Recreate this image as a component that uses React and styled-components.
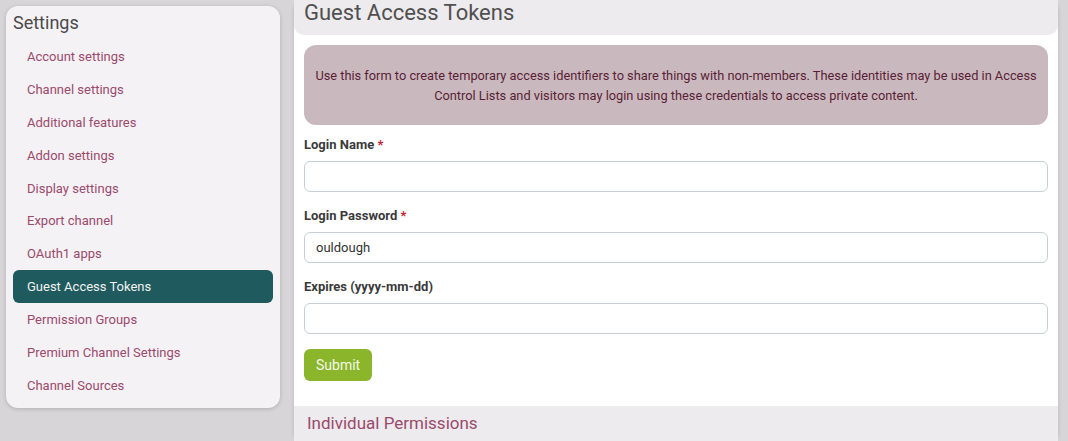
import React from 'react'
import styled, { createGlobalStyle } from 'styled-components'

const GlobalStyle = createGlobalStyle`
  html, body {
    margin: 0;
    padding: 0;
    background: #d7d5d7;
    font-family: Roboto, "Liberation Sans", Arial, sans-serif;
    overflow: hidden;
  }
  * { box-sizing: border-box; }
`

const navItems = [
  'Account settings',
  'Channel settings',
  'Additional features',
  'Addon settings',
  'Display settings',
  'Export channel',
  'OAuth1 apps',
  'Guest Access Tokens',
  'Permission Groups',
  'Premium Channel Settings',
  'Channel Sources',
]

function App() {
  return (
    <Page>
      <GlobalStyle />
      <Sidebar>
        <SideTitle>Settings</SideTitle>
        {navItems.map((item) => (
          <NavLink key={item} $active={item === 'Guest Access Tokens'}>{item}</NavLink>
        ))}
      </Sidebar>
      <Main>
        <Header>Guest Access Tokens</Header>
        <Card>
          <Alert>
            Use this form to create temporary access identifiers to share things with non-members. These identities may be used in Access Control Lists and visitors may login using these credentials to access private content.
          </Alert>
          <Field>
            <Label>Login Name <Required>*</Required></Label>
            <Input type="text" defaultValue="" />
          </Field>
          <Field>
            <Label>Login Password <Required>*</Required></Label>
            <Input type="text" defaultValue="ouldough" />
          </Field>
          <Field>
            <Label>Expires (yyyy-mm-dd)</Label>
            <Input type="text" defaultValue="" />
          </Field>
          <SubmitButton>Submit</SubmitButton>
        </Card>
        <Section>
          <SectionTitle>Individual Permissions</SectionTitle>
        </Section>
      </Main>
    </Page>
  )
}

const Page = styled.div`
  display: flex;
  align-items: flex-start;
  gap: 14px;
  padding: 0 10px 0 6px;
  height: 441px;
`

const Sidebar = styled.nav`
  width: 274px;
  flex-shrink: 0;
  margin-top: 6px;
  background: #f5f2f6;
  border-radius: 12px;
  padding: 0 7px 6px;
  box-shadow: 0 1px 4px rgba(0, 0, 0, 0.18);
  display: flex;
  flex-direction: column;
`

const SideTitle = styled.h3`
  margin: 6px 0 6px;
  font-size: 18px;
  font-weight: 400;
  line-height: 22px;
  color: #4a4a4a;
`

const NavLink = styled.a`
  display: flex;
  align-items: center;
  height: 32.9px;
  padding: 0 14px;
  border-radius: 6px;
  font-size: 13px;
  text-decoration: none;
  color: ${(p) => (p.$active ? '#f2f2f2' : '#9a4a6b')};
  background: ${(p) => (p.$active ? '#1e5a5e' : 'transparent')};
`

const Main = styled.div`
  width: 764px;
  flex-shrink: 0;
  background: #ffffff;
  border-radius: 10px;
  box-shadow: 0 1px 4px rgba(0, 0, 0, 0.15);
  display: flex;
  flex-direction: column;
  height: 441px;
`

const Header = styled.h2`
  margin: 0 0 2px;
  height: 35px;
  padding: 0 10px;
  font-size: 22px;
  font-weight: 400;
  line-height: 26px;
  color: #505050;
  background: #edebee;
  border-radius: 0 0 10px 10px;
`

const Card = styled.div`
  background: #ffffff;
  border-radius: 10px;
  padding: 8px 10px 25px;
`

const Alert = styled.div`
  background: #c9b9bf;
  color: #5a1e34;
  border-radius: 12px;
  padding: 21px 8px 20px;
  font-size: 12.8px;
  line-height: 19.5px;
  text-align: center;
  margin-bottom: 11px;
`

const Field = styled.div`
  margin-bottom: 15px;
`

const Label = styled.label`
  display: block;
  font-size: 13px;
  font-weight: 700;
  line-height: 17px;
  color: #3a3a3a;
  margin-bottom: 8px;
`

const Required = styled.span`
  color: #c8202f;
`

const Input = styled.input`
  display: block;
  width: 100%;
  height: 31px;
  padding: 0 11px;
  border: 1px solid #c9ced4;
  border-radius: 6px;
  font-family: Roboto, "Liberation Sans", Arial, sans-serif;
  font-size: 13px;
  color: #333;
  background: #fff;
  outline: none;
`

const SubmitButton = styled.button`
  height: 32px;
  padding: 0 12px;
  border: none;
  border-radius: 6px;
  background: #8bb52a;
  color: #f4f8ea;
  font-family: Roboto, "Liberation Sans", Arial, sans-serif;
  font-size: 14px;
  cursor: pointer;
`

const Section = styled.div`
  flex: 1;
  background: #edebee;
  padding: 6px 13px;
`

const SectionTitle = styled.h3`
  margin: 0;
  font-size: 17px;
  font-weight: 400;
  line-height: 22px;
  color: #9a4a6b;
`

export default App
